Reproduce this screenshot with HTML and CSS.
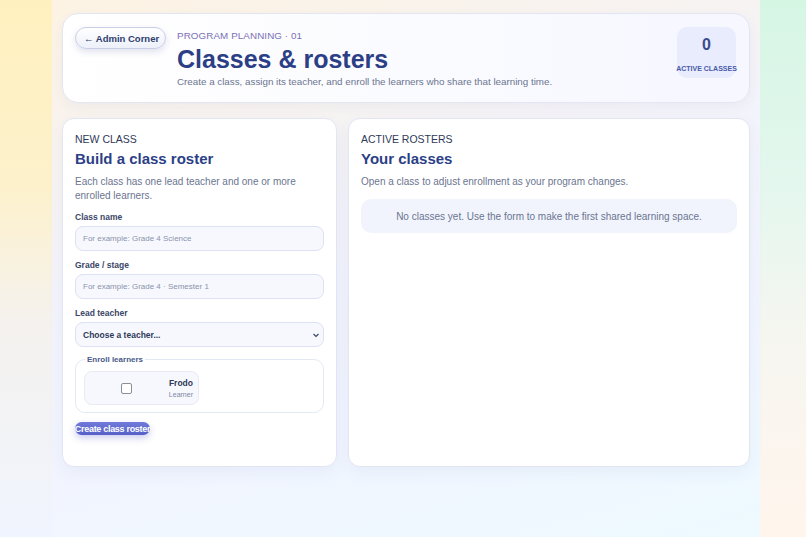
FILE: index.html
```html
<!DOCTYPE html>
<html lang="en">
<head>
  <meta charset="UTF-8">
  <meta name="viewport" content="width=device-width, initial-scale=1.0">
  <title>Classes &amp; rosters</title>
  <link rel="stylesheet" href="styles.css">
</head>
<body>
  <div class="shell">
    <header class="hero">
      <button class="back-btn" type="button">← Admin Corner</button>
      <div class="hero-text">
        <p class="eyebrow">Program planning · 01</p>
        <h1>Classes &amp; rosters</h1>
        <p class="lead">Create a class, assign its teacher, and enroll the learners who share that learning time.</p>
      </div>
      <div class="stat">
        <span class="stat-num">0</span>
        <span class="stat-label">Active classes</span>
      </div>
    </header>

    <main class="grid">
      <section class="card">
        <p class="kicker">New class</p>
        <h2>Build a class roster</h2>
        <p class="muted">Each class has one lead teacher and one or more enrolled learners.</p>
        <form class="form">
          <label for="name">Class name</label>
          <input type="text" id="name" placeholder="For example: Grade 4 Science">
          <label for="grade">Grade / stage</label>
          <input type="text" id="grade" placeholder="For example: Grade 4 · Semester 1">
          <label for="teacher">Lead teacher</label>
          <div class="select">
            <select id="teacher">
              <option>Choose a teacher...</option>
            </select>
            <svg class="chev" width="8" height="8" viewBox="0 0 8 8"><path d="M1.5 3l2.5 2.5L6.5 3" fill="none" stroke="#3b4668" stroke-width="1.2"/></svg>
          </div>
          <fieldset>
            <legend>Enroll learners</legend>
            <label class="learner">
              <span class="box-wrap"><input type="checkbox"></span>
              <span class="who">
                <strong>Frodo</strong>
                <small>Learner</small>
              </span>
            </label>
          </fieldset>
          <button class="submit" type="button">Create class roster</button>
        </form>
      </section>

      <section class="card">
        <p class="kicker">Active rosters</p>
        <h2>Your classes</h2>
        <p class="muted">Open a class to adjust enrollment as your program changes.</p>
        <div class="empty">No classes yet. Use the form to make the first shared learning space.</div>
      </section>
    </main>
  </div>
</body>
</html>
```

FILE: styles.css
```css
:root{
  --navy:#2c3f86;
  --ink:#2f3a5a;
  --muted:#6b7590;
  --line:#e2e6f3;
  --soft:#f7f8fd;
}
*{
  margin:0;
  padding:0;
  box-sizing:border-box;
}
body{
  font-family:"Liberation Sans",Arial,sans-serif;
  color:var(--ink);
  min-height:100vh;
  padding-left:6px;
  background:
    linear-gradient(180deg, #fff1bf 0%, #fdf1cc 35%, #f5f2ee 60%, #f0f4fe 100%) left / 50% 100% no-repeat,
    linear-gradient(180deg, #d6f6e4 0%, #e4f7ee 35%, #f7f6f0 65%, #fff5ed 100%) right / 50% 100% no-repeat;
}
.shell{
  max-width:708px;
  margin:0 auto;
  min-height:100vh;
  padding:13px 10px;
  background:linear-gradient(165deg, #fdf3e3 0%, #f3f3fb 40%, #f1f5ff 70%, #eefaff 100%);
}
.hero{
  display:flex;
  align-items:flex-start;
  gap:11px;
  padding:13px 13px 13px 12px;
  height:90px;
  background:linear-gradient(90deg, #ffffff 0%, #f6f7ff 100%);
  border:1px solid var(--line);
  border-radius:16px;
  box-shadow:0 4px 12px rgba(60,70,130,0.05);
}
.back-btn{
  font-family:inherit;
  font-size:9.5px;
  font-weight:700;
  color:#2f3e6e;
  padding:0 8px;
  width:91px;
  height:22px;
  border-radius:11px;
  border:1px solid #c8cfe6;
  background:linear-gradient(180deg, #ffffff, #edf0fa);
  box-shadow:0 3px 6px rgba(60,70,140,0.15);
  white-space:nowrap;
}
.hero-text{
  flex:1;
  padding-top:3px;
}
.eyebrow{
  font-size:9.8px;
  text-transform:uppercase;
  color:#7a70b6;
  letter-spacing:0.1px;
  line-height:12px;
}
h1{
  font-size:25px;
  font-weight:700;
  color:var(--navy);
  line-height:31px;
  margin-top:2px;
}
.lead{
  font-size:9.8px;
  color:var(--muted);
  margin-top:1px;
}
.stat{
  width:59px;
  height:51px;
  background:#e8ecfd;
  border-radius:10px;
  display:flex;
  flex-direction:column;
  align-items:center;
  padding-top:9px;
}
.stat-num{
  font-size:16px;
  font-weight:700;
  color:#3a4a8c;
}
.stat-label{
  font-size:7px;
  font-weight:700;
  text-transform:uppercase;
  color:#4a5aa8;
  margin-top:11px;
  white-space:nowrap;
}
.grid{
  display:grid;
  grid-template-columns:275px 1fr;
  gap:11px;
  margin-top:15px;
}
.card{
  background:#fff;
  border:1px solid var(--line);
  border-radius:12px;
  padding:14px 12px 13px;
  min-height:349px;
  box-shadow:0 6px 16px rgba(70,90,160,0.06);
}
.kicker{
  font-size:10.5px;
  text-transform:uppercase;
  color:var(--ink);
}
h2{
  font-size:15px;
  font-weight:700;
  color:var(--navy);
  margin-top:5px;
}
.muted{
  font-size:10px;
  line-height:14px;
  color:var(--muted);
  margin-top:8px;
}
.form{
  display:flex;
  flex-direction:column;
  margin-top:9px;
}
.form > label{
  font-size:8.5px;
  font-weight:700;
  color:#3b4668;
  margin-bottom:4px;
}
.form input[type="text"]{
  height:25px;
  border:1px solid #dde2f0;
  border-radius:8px;
  background:var(--soft);
  padding:0 7px;
  font-family:inherit;
  font-size:8px;
  margin-bottom:9px;
}
.form input::placeholder{
  color:#8a93ad;
}
.select{
  position:relative;
  margin-bottom:8px;
}
.select select{
  width:100%;
  height:25px;
  border:1px solid #dde2f0;
  border-radius:8px;
  background:var(--soft);
  padding:0 7px;
  font-family:inherit;
  font-size:8.5px;
  font-weight:700;
  color:var(--ink);
  appearance:none;
}
.chev{
  position:absolute;
  right:4px;
  top:9px;
}
fieldset{
  border:1px solid #e4e8f3;
  border-radius:10px;
  padding:7px 8px 7px;
  min-height:54px;
}
legend{
  font-size:8px;
  font-weight:700;
  color:#4a5a8a;
  padding:0 2px;
  margin-left:1px;
}
.learner{
  display:grid;
  grid-template-columns:1fr 1fr;
  align-items:center;
  width:115px;
  height:34px;
  background:var(--soft);
  border:1px solid #e8ebf5;
  border-radius:8px;
}
.box-wrap{
  display:flex;
  justify-content:center;
}
.box-wrap input{
  width:11px;
  height:11px;
  margin-left:27px;
  appearance:none;
  border:1px solid #8a8f9c;
  border-radius:2px;
  background:#fff;
}
.who{
  display:flex;
  flex-direction:column;
  align-items:flex-end;
  padding-right:5px;
}
.who strong{
  font-size:8.5px;
  color:var(--ink);
}
.who small{
  font-size:7px;
  color:#7e87a3;
  margin-top:3px;
}
.submit{
  align-self:flex-start;
  width:75px;
  height:13px;
  margin-top:9px;
  border:none;
  border-radius:7px;
  background:linear-gradient(180deg, #717ad9, #5560c7);
  color:#fff;
  font-family:inherit;
  font-size:9px;
  font-weight:700;
  white-space:nowrap;
  overflow:visible;
  box-shadow:0 3px 7px rgba(80,90,200,0.3);
  letter-spacing:-0.3px;
  padding:0;
  display:flex;
  justify-content:center;
  align-items:center;
}
.empty{
  margin-top:10px;
  background:#f1f4fd;
  border-radius:10px;
  height:34px;
  display:flex;
  align-items:center;
  justify-content:center;
  font-size:10px;
  color:var(--muted);
}
```
